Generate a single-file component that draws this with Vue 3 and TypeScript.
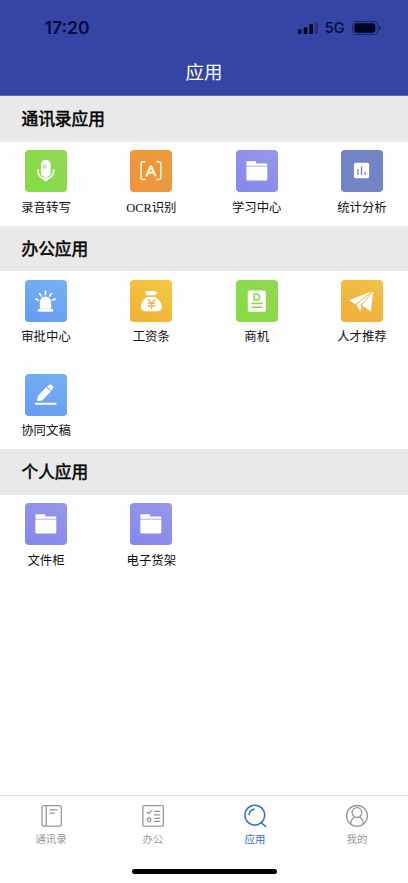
<script setup lang="ts">
type IconName = 'mic' | 'ocr' | 'folder' | 'chart' | 'siren' | 'money' | 'doc' | 'plane' | 'pen'

interface AppItem {
  label: string
  icon: IconName
  tone: string
}

interface Section {
  title: string
  items: AppItem[]
}

const sections: Section[] = [
  {
    title: '通讯录应用',
    items: [
      { label: '录音转写', icon: 'mic', tone: 'green' },
      { label: 'OCR识别', icon: 'ocr', tone: 'orange' },
      { label: '学习中心', icon: 'folder', tone: 'violet' },
      { label: '统计分析', icon: 'chart', tone: 'slate' },
    ],
  },
  {
    title: '办公应用',
    items: [
      { label: '审批中心', icon: 'siren', tone: 'blue' },
      { label: '工资条', icon: 'money', tone: 'yellow' },
      { label: '商机', icon: 'doc', tone: 'green' },
      { label: '人才推荐', icon: 'plane', tone: 'amber' },
      { label: '协同文稿', icon: 'pen', tone: 'blue' },
    ],
  },
  {
    title: '个人应用',
    items: [
      { label: '文件柜', icon: 'folder', tone: 'violet' },
      { label: '电子货架', icon: 'folder', tone: 'violet' },
    ],
  },
]

const tabs = [
  { label: '通讯录', icon: 'book' },
  { label: '办公', icon: 'list' },
  { label: '应用', icon: 'search' },
  { label: '我的', icon: 'user' },
]
const activeTab = '应用'
</script>

<template>
  <div class="page">
    <header class="top">
      <div class="status">
        <span class="time">17:20</span>
        <div class="status-right">
          <svg class="signal" width="20" height="12" viewBox="0 0 20 12">
            <rect x="0" y="7.6" width="3.6" height="4.4" rx="1" />
            <rect x="5.7" y="5.2" width="3.6" height="6.8" rx="1" />
            <rect x="11.3" y="2.2" width="3.6" height="9.8" rx="1" />
            <rect x="16.7" y="0" width="3.3" height="12" rx="1" opacity=".25" />
          </svg>
          <span class="net">5G</span>
          <svg class="battery" width="29" height="14" viewBox="0 0 29 14">
            <rect x=".6" y=".6" width="25.3" height="12.8" rx="4" fill="none" stroke="#06083f" stroke-opacity=".5" stroke-width="1.1" />
            <rect x="2.3" y="2.3" width="21" height="9.4" rx="2.4" />
            <path d="M27 4.9q1.8.6 1.8 2.1T27 9.1z" opacity=".6" />
          </svg>
        </div>
      </div>
      <h1 class="title">应用</h1>
    </header>

    <main class="content">
      <section v-for="section in sections" :key="section.title">
        <h2 class="heading">{{ section.title }}</h2>
        <div class="grid">
          <div v-for="item in section.items" :key="item.label" class="app">
            <div class="tile" :class="item.tone">
              <svg width="42" height="42" viewBox="0 0 42 42" fill="#fff">
                <g v-if="item.icon === 'mic'">
                  <rect x="15.9" y="9.7" width="9.8" height="17.6" rx="4.9" />
                  <path d="M13 19.8v1.4a7.8 7.8 0 0 0 15.6 0v-1.4" fill="none" stroke="#fff" stroke-width="1.8" stroke-linecap="round" opacity=".85" />
                  <path d="M17.3 27.6h7l-1.6 2.7-1.9 1.5-1.9-1.5z" />
                  <path d="M18.3 18.2q0-3.2 3-3.4M20.2 18.7q-.2-1.4 1.2-1.8" fill="none" stroke="#83d64c" stroke-width="1" />
                </g>
                <g v-else-if="item.icon === 'ocr'" fill="none" stroke="#fff4d8" stroke-linecap="round" stroke-linejoin="round">
                  <path d="M15 11.8h-1.6q-2.4 0-2.4 2.4v13q0 2.4 2.4 2.4H15M26.8 11.8h1.6q2.4 0 2.4 2.4v13q0 2.4-2.4 2.4h-1.6" stroke-width="1.5" />
                  <path d="M16.5 25.4l4.4-9.3 4.4 9.3M18 22.6h5.8" stroke-width="2.3" />
                </g>
                <g v-else-if="item.icon === 'folder'">
                  <path d="M10.4 11.2h8.7q.9 0 1.1 1l.2 1.2h10q.9 0 .9.9v1.4H10.4z" />
                  <path d="M10.4 17.1h20.9v12.4q0 1-1 1H11.4q-1 0-1-1z" />
                  <path d="M10.4 15.7h20.9v1.4H10.4z" opacity=".5" />
                </g>
                <g v-else-if="item.icon === 'chart'">
                  <rect x="12.9" y="12.8" width="15.2" height="15.4" rx="1.8" />
                  <path d="M17 19v6M20.5 16.5V25M24 22.2V25" stroke="#7184c5" stroke-width="1.3" />
                </g>
                <g v-else-if="item.icon === 'siren'">
                  <path d="M14.8 28.8V22.3a5.7 5.9 0 0 1 11.4 0v6.5z" />
                  <rect x="12.8" y="29.1" width="15.4" height="2.6" rx=".8" />
                  <path d="M10.8 19.1l2.5.9M14.6 13.6l1.8 2.4M20.5 11v3.4M26.4 13.6l-1.8 2.4M30.2 19.1l-2.5.9" fill="none" stroke="#fff" stroke-width="1.7" stroke-linecap="round" />
                </g>
                <g v-else-if="item.icon === 'money'">
                  <path d="M16.5 15.3L15 12.2q.3-1.4 1.8-.9 1.7-1 3.3-.1 2-1 3.7.1 1.6-.8 2.8.6.9-.2 1 .6l-2.3 2.8z" />
                  <path d="M16.7 17h8.5q6.7 4.7 6.7 10.1 0 4.1-4.1 4.1H14.9q-4.1 0-4.1-4.1 0-5.4 5.9-10.1z" />
                  <path d="M18 19.5l3.5 3.9 3.5-3.9M17.7 23.4h7.6M17.7 26h7.6M21.5 23.4v5.8" fill="none" stroke="#eeb737" stroke-width="1.3" />
                </g>
                <g v-else-if="item.icon === 'doc'">
                  <rect x="11.8" y="10.5" width="18" height="21.3" rx="1.2" />
                  <path d="M18.1 14.2h2.4q3.1 0 3.1 2.9t-3.1 2.9h-2.4zM15.4 23.5h11.2M15.4 27.3h11.2" fill="none" stroke="#8bd34d" stroke-width="1.5" />
                </g>
                <g v-else-if="item.icon === 'plane'">
                  <path d="M32.3 10.7L8 20.3l6.3 3.9z" />
                  <path d="M32.3 10.7L15.2 24.6l4.3 6.9 1.8-4.3-2-1.6z" />
                  <path d="M32.3 10.7L20.8 25.2l9 6.4z" />
                  <path d="M32.3 10.7L14.8 24.4M32.3 10.7L19.9 25.5l1 .9-1.4 5" fill="none" stroke="#f1b742" stroke-width=".8" />
                </g>
                <g v-else>
                  <path d="M12.7 26.6l.6-4.6 8.1-8.5 4.1 4-8.2 8.4z" stroke="#fff" stroke-width="1" stroke-linejoin="round" />
                  <path d="M22.5 12.5l1.7-1.2q1.4-.9 2.6.2l.6.6q1 1.2.1 2.4l-1.1 1.8z" stroke="#fff" stroke-width=".8" stroke-linejoin="round" />
                  <path d="M21.7 13.3l4.1 4" stroke="#91bef7" stroke-width=".9" />
                  <path d="M10.8 29.7h19.8" stroke="#fff" stroke-width="2" stroke-linecap="round" />
                </g>
              </svg>
            </div>
            <span class="label">{{ item.label }}</span>
          </div>
        </div>
      </section>
    </main>

    <footer class="bottom">
      <nav class="tabs">
        <div v-for="tab in tabs" :key="tab.label" class="tab" :class="{ active: tab.label === activeTab }">
          <svg width="24" height="24" viewBox="0 0 24 24" fill="none" stroke="currentColor" stroke-width="1.3">
            <g v-if="tab.icon === 'book'">
              <rect x="3" y="1.6" width="19.3" height="20.6" rx="2.2" />
              <path d="M7.2 1.6v20.6M10.5 5.8h8M10.5 9.2h5.5" />
            </g>
            <g v-else-if="tab.icon === 'list'">
              <rect x="1.8" y="1.6" width="20.6" height="20.6" rx="1" />
              <path d="M5.8 7.7l1.8 2 3.2-3.6M13.1 7.3h6M13.1 10.8h6M13.1 14.3h6M13.1 17.3h6" />
              <circle cx="8.1" cy="15.8" r="1.8" />
            </g>
            <g v-else-if="tab.icon === 'search'" stroke-width="1.5">
              <circle cx="11.8" cy="11.1" r="9.9" />
              <path d="M6.1 11.3q.1-5.4 5.7-6.3M17.5 18.2l5.6 4.6" />
            </g>
            <g v-else>
              <circle cx="12" cy="11.9" r="10.4" />
              <circle cx="12" cy="8.6" r="4.9" />
              <path d="M5.6 20q.4-5.2 4-6.9M18.4 20q-.4-5.2-4-6.9" />
            </g>
          </svg>
          <span>{{ tab.label }}</span>
        </div>
      </nav>
      <div class="home-indicator"></div>
    </footer>
  </div>
</template>

<style>
body {
  background: #fff;
}
</style>

<style scoped>
.page {
  display: flex;
  flex-direction: column;
  height: 883px;
  overflow: hidden;
  background: #fefefe;
  color: #111;
  font-family: 'Noto Sans CJK SC', sans-serif;
}

.top {
  flex: none;
  box-sizing: border-box;
  height: 96px;
  background: #3545a5;
  border-bottom: 1px solid #5b67b2;
}

.status {
  display: flex;
  align-items: center;
  justify-content: space-between;
  box-sizing: border-box;
  height: 55px;
  padding: 0 27.5px 0 44.5px;
  color: #06083f;
  font-family: Inter, sans-serif;
}

.time {
  font-size: 17.5px;
  font-weight: 600;
}

.status-right {
  display: flex;
  align-items: center;
  fill: #02031f;
}

.net {
  margin: 0 7px;
  font-size: 14.5px;
  font-weight: 500;
}

.title {
  margin: 0;
  color: #fff;
  font-size: 18.5px;
  font-weight: 400;
  line-height: 32px;
  text-align: center;
}

.content {
  flex: 1;
}

.heading {
  height: 45.5px;
  margin: 0;
  padding-left: 21.5px;
  background: #e9e9e9;
  color: #050505;
  font-size: 16.7px;
  font-weight: 400;
  line-height: 45.5px;
  -webkit-text-stroke: 0.55px #050505;
}

.grid {
  display: grid;
  grid-template-columns: repeat(4, 50px);
  justify-content: space-between;
  row-gap: 28px;
  padding: 8.5px 21px 9.5px;
}

.app {
  display: flex;
  flex-direction: column;
  align-items: center;
  height: 66px;
}

.tile {
  width: 42px;
  height: 42px;
  border-radius: 4px;
}

.tile svg,
.tab svg {
  display: block;
}

.green {
  background: linear-gradient(45deg, #83dc43, #93d855);
}

.orange {
  background: linear-gradient(45deg, #f1943a, #e99b3f);
}

.violet {
  background: linear-gradient(25deg, #8586ed, #9698e8);
}

.slate {
  background: #7284c5;
}

.blue {
  background: linear-gradient(25deg, #649cf3, #78b0f3);
}

.yellow {
  background: linear-gradient(25deg, #f1b134, #f2c844);
}

.amber {
  background: linear-gradient(25deg, #f3ac3c, #efc247);
}

.label {
  margin-top: 6.5px;
  font-family: 'Liberation Serif', 'Noto Sans CJK SC', serif;
  font-size: 12.4px;
  line-height: 18px;
  white-space: nowrap;
}

.bottom {
  display: flex;
  flex: none;
  flex-direction: column;
  align-items: center;
  box-sizing: border-box;
  height: 88px;
  border-top: 1px solid #dedede;
}

.tabs {
  display: grid;
  grid-template-columns: repeat(4, 102px);
  height: 73px;
}

.tab {
  display: flex;
  flex-direction: column;
  align-items: center;
  padding-top: 8px;
  color: #999;
  font-size: 10.4px;
  line-height: 15px;
}

.tab span {
  margin-top: 2.5px;
}

.tab.active {
  color: #3973b9;
}

.home-indicator {
  width: 145px;
  height: 5px;
  border-radius: 3px;
  background: #000;
}
</style>
